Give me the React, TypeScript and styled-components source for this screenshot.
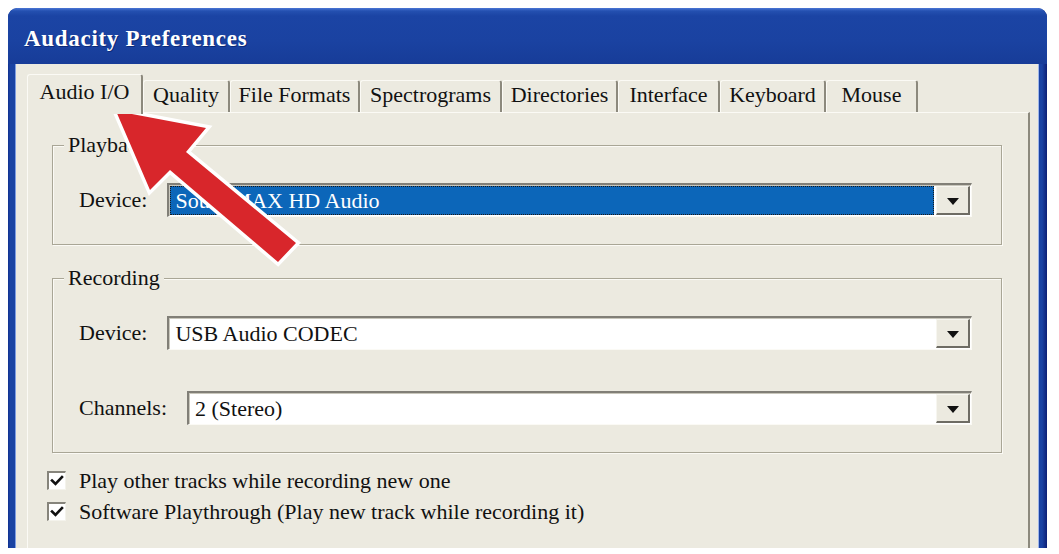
import React from "react";
import styled, { createGlobalStyle } from "styled-components";

const Global = createGlobalStyle`
  html, body { margin: 0; padding: 0; background: #fff; }
  body { font-family: "Liberation Serif", "Times New Roman", serif; }
  * { box-sizing: border-box; }
`;

const BEIGE = "#ECEAE0";

const Page = styled.div`
  position: relative;
  width: 1059px;
  height: 554px;
  overflow: hidden;
  padding: 8px 0 0 8px;
`;

const Window = styled.div`
  width: 1039px;
  height: 540px;
  border-radius: 9px 9px 0 0;
  background: linear-gradient(90deg, #0f2f8e 0, #1a43a3 2px, #1a43a3 calc(100% - 5px), #0c1f75 100%);
  display: flex;
  flex-direction: column;
  overflow: hidden;
`;

const TitleBar = styled.div`
  height: 56px;
  flex: none;
  display: flex;
  align-items: center;
  padding: 6px 0 0 16px;
  color: #fff;
  font-weight: bold;
  font-size: 23px;
  letter-spacing: 0.7px;
  background: linear-gradient(180deg, #4a76d6 0, #2450b0 3px, #1b44a4 8px, #1a42a1 60%, #173c98 100%);
  border-radius: 9px 9px 0 0;
  text-shadow: 1px 1px 0 #0c2a78;
`;

const Client = styled.div`
  flex: 1;
  margin: 0 8px 0 7px;
  background: ${BEIGE};
  padding: 10px 9px 0 12px;
  display: flex;
  flex-direction: column;
  box-shadow: inset 1px 0 #7f9ee2, inset -1px 0 #9fb6ea;
  min-height: 0;
`;

const TabStrip = styled.div`
  display: flex;
  align-items: flex-end;
  height: 38px;
  flex: none;
  position: relative;
  z-index: 1;
`;

const Tab = styled.div<{ $w: number; $active?: boolean }>`
  width: ${(p) => p.$w}px;
  height: ${(p) => (p.$active ? 40 : 32)}px;
  margin-bottom: ${(p) => (p.$active ? -2 : 0)}px;
  background: ${BEIGE};
  border-top: 1px solid #fbfaf5;
  border-left: 1px solid #fbfaf5;
  border-right: 2px solid #8c897d;
  border-radius: 3px 3px 0 0;
  font-size: 22px;
  color: #111;
  display: flex;
  align-items: center;
  justify-content: center;
  padding-bottom: ${(p) => (p.$active ? 6 : 3)}px;
  white-space: nowrap;
  flex: none;
`;

const Panel = styled.div`
  flex: 1;
  border-top: 1px solid #fbfaf5;
  border-left: 1px solid #fbfaf5;
  border-right: 2px solid #8c897d;
  padding: 32px 26px 0 19px;
  display: flex;
  flex-direction: column;
`;

const GroupBox = styled.div<{ $mt?: number }>`
  position: relative;
  margin: ${(p) => p.$mt ?? 0}px 0 0 5px;
  border: 1px solid #a9a696;
  box-shadow: inset 1px 1px #fbfaf5, 1px 1px #fbfaf5;
  padding: 37px 29px 27px 26px;
  display: flex;
  flex-direction: column;
  gap: 41px;
`;

const GroupLabel = styled.span`
  position: absolute;
  top: -15px;
  left: 11px;
  padding: 0 4px;
  background: ${BEIGE};
  font-size: 22px;
  line-height: 28px;
  color: #111;
`;

const Row = styled.div`
  display: flex;
  align-items: center;
  gap: 20px;
`;

const FieldLabel = styled.span`
  font-size: 22px;
  color: #111;
  white-space: nowrap;
`;

const Combo = styled.div`
  flex: 1;
  height: 34px;
  display: flex;
  border-top: 2px solid #817f77;
  border-left: 2px solid #817f77;
  border-bottom: 1px solid #fbfaf5;
  border-right: 1px solid #fbfaf5;
  box-shadow: inset 1px 1px #c9c7bc;
  background: #fff;
  padding: 1px;
`;

const ComboField = styled.div<{ $selected?: boolean }>`
  flex: 1;
  display: flex;
  align-items: center;
  padding-left: 4px;
  font-size: 22px;
  color: ${(p) => (p.$selected ? "#fff" : "#111")};
  background: ${(p) => (p.$selected ? "#0c66b9" : "#fff")};
  border: 1px ${(p) => (p.$selected ? "dotted #1a1a1a" : "solid transparent")};
  margin-right: 2px;
  white-space: nowrap;
`;

const DropButton = styled.div`
  width: 34px;
  flex: none;
  background: ${BEIGE};
  border-top: 1px solid #f7f6f0;
  border-left: 1px solid #f7f6f0;
  border-bottom: 2px solid #6e6c64;
  border-right: 2px solid #6e6c64;
  display: flex;
  align-items: center;
  justify-content: center;
`;

const Triangle = styled.span`
  width: 0;
  height: 0;
  border-left: 6px solid transparent;
  border-right: 6px solid transparent;
  border-top: 7px solid #111;
  margin-top: 2px;
`;

const CheckList = styled.div`
  margin-top: 15px;
  display: flex;
  flex-direction: column;
  gap: 6px;
`;

const CheckRow = styled.div`
  display: flex;
  align-items: center;
  gap: 13px;
  font-size: 22px;
  line-height: 25px;
  color: #111;
  white-space: nowrap;
`;

const CheckBox = styled.span`
  width: 19px;
  height: 19px;
  flex: none;
  background: #fff;
  border-top: 2px solid #86847b;
  border-left: 2px solid #86847b;
  border-bottom: 1px solid #f4f3ec;
  border-right: 1px solid #f4f3ec;
  display: flex;
  align-items: center;
  justify-content: center;
`;

const ArrowLayer = styled.svg`
  position: absolute;
  top: 0;
  left: 0;
  width: 1059px;
  height: 554px;
  pointer-events: none;
`;

const tabs = [
  { label: "Audio I/O", w: 116, active: true },
  { label: "Quality", w: 87 },
  { label: "File Formats", w: 130 },
  { label: "Spectrograms", w: 142 },
  { label: "Directories", w: 116 },
  { label: "Interface", w: 102 },
  { label: "Keyboard", w: 106 },
  { label: "Mouse", w: 92 },
];

const Check = () => (
  <svg width="14" height="14" viewBox="0 0 14 14">
    <path d="M2 6.5 L5.5 10 L12 3" fill="none" stroke="#111" strokeWidth="2.6" strokeLinecap="square" />
  </svg>
);

const ComboBox = ({ value, selected }: { value: string; selected?: boolean }) => (
  <Combo>
    <ComboField $selected={selected}>{value}</ComboField>
    <DropButton>
      <Triangle />
    </DropButton>
  </Combo>
);

export default function App() {
  return (
    <Page>
      <Global />
      <Window>
        <TitleBar>Audacity Preferences</TitleBar>
        <Client>
          <TabStrip>
            {tabs.map((t) => (
              <Tab key={t.label} $w={t.w} $active={t.active}>
                {t.label}
              </Tab>
            ))}
          </TabStrip>
          <Panel>
            <GroupBox>
              <GroupLabel>Playback</GroupLabel>
              <Row>
                <FieldLabel>Device:</FieldLabel>
                <ComboBox value="SoundMAX HD Audio" selected />
              </Row>
            </GroupBox>
            <GroupBox $mt={33}>
              <GroupLabel>Recording</GroupLabel>
              <Row>
                <FieldLabel>Device:</FieldLabel>
                <ComboBox value="USB Audio CODEC" />
              </Row>
              <Row>
                <FieldLabel>Channels:</FieldLabel>
                <ComboBox value="2 (Stereo)" />
              </Row>
            </GroupBox>
            <CheckList>
              <CheckRow>
                <CheckBox>
                  <Check />
                </CheckBox>
                Play other tracks while recording new one
              </CheckRow>
              <CheckRow>
                <CheckBox>
                  <Check />
                </CheckBox>
                Software Playthrough (Play new track while recording it)
              </CheckRow>
            </CheckList>
          </Panel>
        </Client>
      </Window>
      <ArrowLayer viewBox="0 0 1059 554">
        <polygon
          points="116,111 206,128 186,152 296,243 278,262 170,170 150,190"
          fill="#d8262b"
          stroke="#fff"
          strokeWidth="7"
          strokeLinejoin="miter"
          paintOrder="stroke"
        />
      </ArrowLayer>
    </Page>
  );
}
